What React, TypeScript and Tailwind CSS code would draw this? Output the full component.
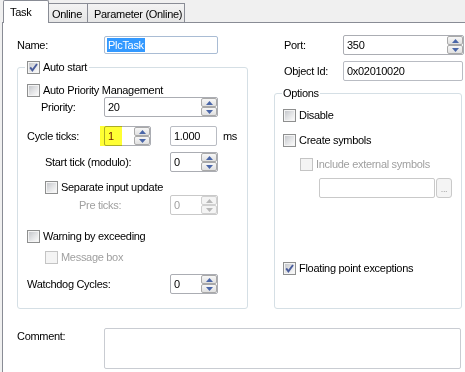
import React from "react";

function Check({ checked = false, disabled = false }: { checked?: boolean; disabled?: boolean }) {
  return (
    <span
      className={`relative flex w-[13px] h-[13px] shrink-0 border ${
        disabled ? "border-[#c4c4c4] bg-[#f4f4f4]" : "border-[#8e8f8f] bg-[#f4f4f4]"
      }`}
    >
      <span
        className={`m-px flex-1 ${
          disabled ? "bg-[#f4f4f4]" : "bg-linear-to-br from-[#c6c8cc] via-[#e2e3e5] to-[#fafafa]"
        }`}
      />
      {checked && (
        <svg className="absolute left-0 top-0" width={11} height={11} viewBox="0 0 11 11">
          <path d="M2.2 5.4 L4.4 8.3 L9 2" fill="none" stroke="#4a5d9c" strokeWidth={1.9} />
        </svg>
      )}
    </span>
  );
}

function CheckRow({
  label,
  checked,
  disabled,
  className = "",
}: {
  label: string;
  checked?: boolean;
  disabled?: boolean;
  className?: string;
}) {
  return (
    <div className={`flex items-center h-[13px] gap-[3px] ${className}`}>
      <Check checked={checked} disabled={disabled} />
      <span className={`whitespace-nowrap ${disabled ? "text-[#a0a0a0]" : ""}`}>{label}</span>
    </div>
  );
}

function Arrow({ up, color }: { up?: boolean; color: string }) {
  return (
    <svg width={7} height={4} viewBox="0 0 7 4">
      <path d={up ? "M0 4 L3.5 0 L7 4Z" : "M0 0 L3.5 4 L7 0Z"} fill={color} />
    </svg>
  );
}

function Spinner({ disabled }: { disabled?: boolean }) {
  const color = disabled ? "#b8b8b8" : "#4a66a8";
  const btn = `flex-1 flex items-center justify-center border rounded-[2px] ${
    disabled ? "border-[#d0d0d0] bg-[#f4f4f4]" : "border-[#a9a9a9] bg-linear-to-b from-[#f7f7f7] to-[#e0e0e0]"
  }`;
  return (
    <div className="flex flex-col w-[16px]">
      <div className={btn}>
        <Arrow up color={color} />
      </div>
      <div className={btn}>
        <Arrow color={color} />
      </div>
    </div>
  );
}

function SpinBox({ value, className = "", disabled }: { value: string; className?: string; disabled?: boolean }) {
  return (
    <div className={`flex h-[20px] border rounded-[2px] bg-white ${disabled ? "border-[#c9c9c9]" : "border-[#abadb3]"} ${className}`}>
      <span className={`flex-1 flex items-center pl-[3px] ${disabled ? "text-[#a0a0a0]" : ""}`}>{value}</span>
      <Spinner disabled={disabled} />
    </div>
  );
}

function TextBox({ value = "", className = "" }: { value?: string; className?: string }) {
  return (
    <div className={`flex items-center h-[20px] pl-[3px] border border-[#b9bcc3] rounded-[2px] bg-white ${className}`}>
      {value}
    </div>
  );
}

export default function App() {
  return (
    <div className="w-[465px] h-[372px] overflow-hidden flex flex-col bg-[#f0f0f0] text-black text-[11px] leading-[13px] tracking-[-0.3px] whitespace-nowrap font-['Liberation_Sans',Arial,sans-serif]">
      {/* tab strip */}
      <div className="relative z-10 flex items-end h-[22px] pl-[3px]">
        <div className="h-[23px] w-[46px] -mb-px bg-white border border-b-0 border-[#898c95] rounded-t-[2px] pl-[6px] pt-[5px]">
          Task
        </div>
        <div className="h-[19px] w-[39px] border-t border-r border-[#898c95] bg-linear-to-b from-[#f3f3f3] to-[#e6e6e6] pl-[3px] pt-[4px]">
          Online
        </div>
        <div className="h-[19px] w-[97px] border-t border-r border-[#898c95] bg-linear-to-b from-[#f3f3f3] to-[#e6e6e6] pl-[6px] pt-[4px]">
          Parameter (Online)
        </div>
      </div>

      {/* tab page */}
      <div className="flex-1 flex flex-col ml-[2px] bg-white border-l border-t border-[#898c95] pl-[14px] pt-[12px]">
        <div className="flex gap-[25px] h-[274px]">
          {/* left column */}
          <div className="flex flex-col w-[231px]">
            <div className="flex items-center h-[20px]">
              <span className="w-[87px]">Name:</span>
              <div className="flex items-center h-[18px] w-[114px] pl-[2px] border border-[#a9bcd4] rounded-[2px] bg-white">
                <span className="bg-[#3399ff] text-white px-px leading-[14px]">PlcTask</span>
              </div>
            </div>

            <fieldset className="flex-1 mt-[6px] border border-[#d5dfe5] rounded-[3px]">
              <legend className="ml-[7px] px-[2px]">
                <CheckRow label="Auto start" checked />
              </legend>

              <CheckRow label="Auto Priority Management" className="mt-[10px] pl-[9px]" />

              <div className="flex items-center h-[20px]">
                <span className="w-[86px] pl-[23px]">Priority:</span>
                <SpinBox value="20" className="w-[114px]" />
              </div>

              <div className="flex items-center h-[20px] mt-[9px]">
                <span className="w-[86px] pl-[9px]">Cycle ticks:</span>
                <div className="relative">
                  <SpinBox value="1" className="w-[47px] text-[#6a1500]" />
                  <div className="absolute -left-[4px] top-0 w-[22px] h-[20px] bg-[#ffff33] mix-blend-multiply" />
                </div>
                <TextBox value="1.000" className="w-[47px] ml-[19px]" />
                <span className="ml-[6px]">ms</span>
              </div>

              <div className="flex items-center h-[20px] mt-[6px]">
                <span className="w-[152px] pl-[27px]">Start tick (modulo):</span>
                <SpinBox value="0" className="w-[48px]" />
              </div>

              <CheckRow label="Separate input update" className="mt-[9px] pl-[27px]" />

              <div className="flex items-center h-[20px] mt-px">
                <span className="w-[152px] pl-[61px] text-[#a0a0a0]">Pre ticks:</span>
                <SpinBox value="0" className="w-[48px]" disabled />
              </div>

              <CheckRow label="Warning by exceeding" className="mt-[15px] pl-[9px]" />
              <CheckRow label="Message box" disabled className="mt-[8px] pl-[27px]" />

              <div className="flex items-center h-[20px] mt-[10px]">
                <span className="w-[152px] pl-[9px]">Watchdog Cycles:</span>
                <SpinBox value="0" className="w-[48px]" />
              </div>
            </fieldset>
          </div>

          {/* right column */}
          <div className="flex flex-col flex-1">
            <div className="flex items-center h-[20px]">
              <span className="w-[70px] pl-[11px]">Port:</span>
              <SpinBox value="350" className="w-[121px]" />
            </div>
            <div className="flex items-center h-[20px] mt-[6px]">
              <span className="w-[70px] pl-[11px]">Object Id:</span>
              <TextBox value="0x02010020" className="w-[120px]" />
            </div>

            <fieldset className="flex-1 mt-[6px] ml-px w-[188px] border border-[#d5dfe5] rounded-[3px]">
              <legend className="ml-[7px] px-px">Options</legend>
              <CheckRow label="Disable" className="mt-[9px] pl-[8px]" />
              <CheckRow label="Create symbols" className="mt-[12px] pl-[8px]" />
              <CheckRow label="Include external symbols" disabled className="mt-[11px] pl-[25px]" />
              <div className="flex items-center h-[20px] mt-[7px] pl-[44px]">
                <div className="h-[20px] w-[116px] border border-[#c9c9c9] rounded-[2px] bg-white" />
                <div className="flex items-end justify-center h-[20px] w-[16px] ml-px pb-[3px] border border-[#c9c9c9] rounded-[3px] bg-[#f4f4f4] text-[#a0a0a0] text-[9px] leading-[9px]">
                  ...
                </div>
              </div>
              <CheckRow label="Floating point exceptions" checked className="mt-[64px] pl-[8px]" />
            </fieldset>
          </div>
        </div>

        {/* comment */}
        <div className="flex items-start mt-[19px]">
          <span className="w-[87px] pt-[2px]">Comment:</span>
          <div className="h-[41px] w-[357px] border border-[#c9ccd2] rounded-[2px] bg-white" />
        </div>
      </div>
    </div>
  );
}
